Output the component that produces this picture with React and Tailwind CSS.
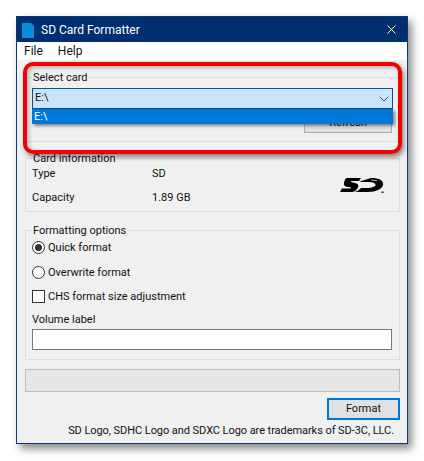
import { X, ChevronDown } from 'lucide-react';

function SdLogo() {
    return (
        <svg width="44" height="16" viewBox="0 0 44 16" className="absolute right-[15px] top-[11px]">
            {/* S */}
            <path d="M7 1 L21 1 L19 4 L12 4 C10.5 4 10.5 5 12 5.3 L15 6 C19 7 19 9 17 12 C15.5 14.5 13 15 10 15 L0 15 L2 11.5 L10 11.5 C11.5 11.5 11.5 10.5 10 10.3 L7 9.7 C3.5 9 3.5 7 4.5 4 C5 2.5 5.5 1 7 1 Z" fill="#000" />
            {/* D */}
            <path d="M21 4 L31 1 C39 1 44 3.5 43 8 C42 12 36 15 28 15 L15 15 C18 14 20 12 21 11 L27 11 C31 11 35 10 35.5 8 C36 6 32 5 29 5 L20 5 Z" fill="#000" />
            <path d="M31 3 L37 3.5" stroke="#f0f0f0" strokeWidth="0.7" />
            <rect x="41" y="14.5" width="3" height="1.5" fill="#666" />
        </svg>
    );
}

function Group({ title, className, children }) {
    return (
        <fieldset className={`relative border border-[#dcdcdc] px-[6px] ${className}`}>
            <legend className="px-[1px] h-4 leading-[18px]">{title}</legend>
            {children}
        </fieldset>
    );
}

export default function App() {
    return (
        <div className="w-[424px] h-[461px] bg-white pt-4 pl-4 text-[11px] text-[#111] font-['Roboto',sans-serif]">
            <div className="relative w-[392px] h-[428px] border border-[#0a3a78] bg-[#f0f0f0] shadow-[4px_5px_8px_rgba(0,0,0,0.45)] flex flex-col">
                {/* Title bar */}
                <div className="h-[25px] bg-[#002f6f] text-white text-[12px] flex items-center pl-[5px] pr-[8px]">
                    <svg width="13" height="16" viewBox="0 0 13 16">
                        <path d="M0 1 L9 1 L12 4 L12 16 L0 16 Z" fill="#0b8ed8" />
                    </svg>
                    <span className="ml-[6px]">SD Card Formatter</span>
                    <X size={15} strokeWidth={1.5} className="ml-auto" />
                </div>

                {/* Menu */}
                <div className="h-[18px] bg-white text-[12px] flex items-center pl-[7px] gap-[15px]">
                    <span>File</span>
                    <span>Help</span>
                </div>

                <div className="flex-1 pl-2 pr-[7px] pt-[9px]">
                    <Group title="Select card" className="h-[73px]">
                        <div className="relative mt-[3px]">
                            <div className="h-[21px] bg-[#cce4f7] border border-[#005499] flex items-center pl-[2px]">
                                <span>E:\</span>
                                <ChevronDown size={16} strokeWidth={1.3} className="ml-auto text-[#333]" />
                            </div>
                            <div className="absolute z-10 left-0 right-0 top-[21px] h-[15px] bg-[#0078d7] text-white leading-[15px] pl-[2px] shadow-[2px_2px_3px_rgba(0,0,0,0.45)]">
                                E:\
                            </div>
                        </div>
                        <div className="flex justify-end mt-[2px] pr-[1px]">
                            <button className="w-[88px] h-[22px] pt-[2px] bg-[#e1e1e1] border border-[#adadad]">Refresh</button>
                        </div>
                    </Group>

                    <Group title="Card information" className="h-[62px] mt-2">
                        <div className="grid grid-cols-[120px_1fr] gap-y-2">
                            <span className="h-4">Type</span>
                            <span className="h-4">SD</span>
                            <span className="h-4">Capacity</span>
                            <span className="h-4">1.89 GB</span>
                        </div>
                        <SdLogo />
                    </Group>

                    <Group title="Formatting options" className="h-[138px] mt-[10px]">
                        <div className="flex items-center gap-[3px] mt-[1px] h-4">
                            <span className="w-[13px] h-[13px] rounded-full border border-[#333] bg-white flex items-center justify-center">
                                <span className="w-[7px] h-[7px] rounded-full bg-[#333]" />
                            </span>
                            <span className="pt-[2px]">Quick format</span>
                        </div>
                        <div className="flex items-center gap-[3px] mt-[9px] h-4">
                            <span className="w-[13px] h-[13px] rounded-full border border-[#333] bg-white" />
                            <span className="pt-[2px]">Overwrite format</span>
                        </div>
                        <div className="flex items-center gap-[3px] mt-2 h-4">
                            <span className="w-[13px] h-[13px] border border-[#333] bg-white" />
                            <span className="pt-[2px]">CHS format size adjustment</span>
                        </div>
                        <div className="mt-[7px] h-4 leading-[18px]">Volume label</div>
                        <div className="h-[21px] mt-[2px] mr-[1px] bg-white border border-[#7a7a7a]" />
                    </Group>

                    <div className="h-[23px] mt-[9px] bg-[#e6e6e6] border border-[#bcbcbc]" />

                    <div className="flex justify-end mt-[6px]">
                        <button className="w-[73px] h-[22px] bg-[#e1e1e1] border-2 border-[#0078d7]">Format</button>
                    </div>

                    <div className="text-right pr-[6px] mt-[3px] h-4 leading-4 whitespace-nowrap tracking-[-0.06px]">
                        SD Logo, SDHC Logo and SDXC Logo are trademarks of SD-3C, LLC.
                    </div>
                </div>

                {/* Red highlight */}
                <div className="absolute z-20 left-[6px] top-[45px] w-[379px] h-[92px] rounded-[10px] border-4 border-[#f00000] shadow-[2px_3px_5px_rgba(0,0,0,0.45),inset_2px_2px_4px_rgba(0,0,0,0.25)]" />
            </div>
        </div>
    );
}
